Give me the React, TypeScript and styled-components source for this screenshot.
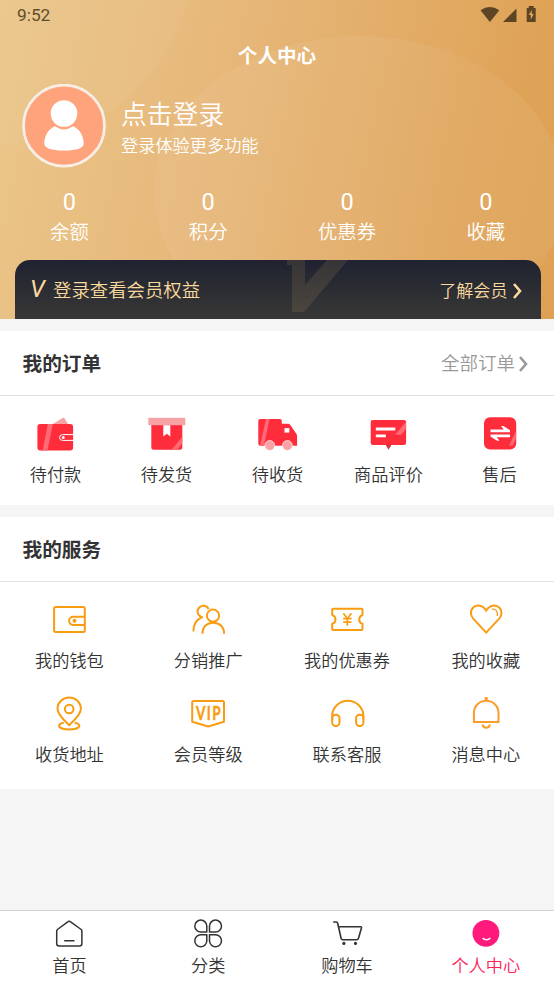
import React from "react";
import styled, { createGlobalStyle } from "styled-components";

const ORANGE = "#f89c12";
const RED = "#ff2c3c";
const INK = "#333333";

const GlobalStyle = createGlobalStyle`
  * { box-sizing: border-box; }
  html, body { margin: 0; padding: 0; background: #f5f5f5; overflow: hidden; }
  body { font-family: Roboto, "Noto Sans CJK SC", sans-serif; font-weight: 350; color: #333; }
  svg { display: block; }
`;

const Page = styled.div`
  width: 554px;
  height: 984px;
  display: flex;
  flex-direction: column;
  overflow: hidden;
  background: #f5f5f5;
`;

const Header = styled.header`
  position: relative;
  flex: none;
  height: 319px;
  display: flex;
  flex-direction: column;
  color: #fff;
  background: linear-gradient(102deg, #ebc68a 0%, #e6b678 42%, #dfa357 88%, #dea055 100%);
`;

const HeaderArt = styled.svg`
  position: absolute;
  inset: 0;
`;

const StatusBar = styled.div`
  position: relative;
  height: 30px;
  padding: 0 17px;
  display: flex;
  justify-content: space-between;
  color: #614d2f;
`;

const Clock = styled.span`
  font-size: 17.3px;
  font-weight: 400;
  line-height: 31px;
`;

const Title = styled.h1`
  position: relative;
  margin: 0;
  height: 51px;
  text-align: center;
  font-size: 19.6px;
  font-weight: 700;
  line-height: 53px;
`;

const Profile = styled.div`
  position: relative;
  height: 105px;
  padding: 2.5px 0 0 22px;
  display: flex;
  gap: 15px;
`;

const ProfileText = styled.div`
  padding-top: 12.5px;
`;

const LoginName = styled.div`
  font-size: 25.8px;
  line-height: 38px;
`;

const LoginHint = styled.div`
  font-size: 17.2px;
  line-height: 24px;
`;

const Stats = styled.div`
  position: relative;
  display: grid;
  grid-template-columns: repeat(4, 138.8px);
  height: 74px;
  text-align: center;
`;

const StatValue = styled.div`
  font-size: 23.5px;
  font-weight: 400;
  line-height: 32px;
`;

const StatLabel = styled.div`
  font-size: 19.4px;
  line-height: 30px;
`;

const MemberCard = styled.div`
  position: relative;
  height: 59px;
  margin: 0 13.5px 0 15px;
  padding: 0 18px 0 15px;
  display: flex;
  align-items: center;
  border-radius: 15px 15px 0 0;
  overflow: hidden;
  color: #fbdb9d;
  background: linear-gradient(#1f2230, #363636 90%);
`;

const Watermark = styled.svg`
  position: absolute;
  left: 271px;
  top: 0;
`;

const VMark = styled.span`
  width: 23px;
  font-size: 24px;
  font-weight: 400;
  font-style: italic;
  line-height: 59px;
`;

const MemberText = styled.span`
  flex: 1;
  padding-top: 2px;
  font-size: 18.4px;
  line-height: 30px;
`;

const MemberLink = styled.span`
  display: flex;
  align-items: center;
  gap: 4px;
  padding-top: 2px;
  font-size: 17.1px;
  line-height: 30px;
`;

const Section = styled.section<{ $height: number }>`
  flex: none;
  height: ${(p) => p.$height}px;
  margin-top: 12px;
  background: #fff;
`;

const SectionHead = styled.div`
  height: 65px;
  padding: 0 25px 0 22.5px;
  display: flex;
  justify-content: space-between;
  align-items: center;
  border-bottom: 1px solid #e0e0e0;
`;

const Heading = styled.h2`
  margin: 0;
  padding-top: 3px;
  font-size: 19.7px;
  font-weight: 700;
  line-height: 30px;
`;

const MoreLink = styled.span`
  display: flex;
  align-items: center;
  gap: 3px;
  padding-top: 2px;
  font-size: 18.5px;
  line-height: 30px;
  color: #999;
`;

const Grid = styled.div<{ $cols: number; $size: number; $top: number; $row: number; $nudge: string }>`
  display: grid;
  grid-template-columns: repeat(${(p) => p.$cols}, ${(p) => p.$size}px);
  grid-auto-rows: ${(p) => p.$row}px;
  padding-top: ${(p) => p.$top}px;

  svg {
    transform: translate(${(p) => p.$nudge});
  }
`;

const Cell = styled.div<{ $active?: boolean; $label: number }>`
  display: flex;
  flex-direction: column;
  align-items: center;
  font-size: 17.2px;
  line-height: ${(p) => p.$label}px;
  white-space: nowrap;
  color: ${(p) => (p.$active ? "#fc2259" : INK)};
`;

const TabBar = styled.nav`
  flex: none;
  height: 74px;
  margin-top: auto;
  border-top: 1px solid #cfcfcf;
  background: #fff;
`;

const Icon = ({ children }: { children: React.ReactNode }) => (
  <svg width="44" height="44" viewBox="0 0 44 44" fill="none">
    {children}
  </svg>
);

const Line = ({ children, color = ORANGE, w = 2 }: { children: React.ReactNode; color?: string; w?: number }) => (
  <Icon>
    <g stroke={color} strokeWidth={w} strokeLinejoin="round">
      {children}
    </g>
  </Icon>
);

const Chevron = ({ color }: { color: string }) => (
  <svg width="11" height="18" viewBox="0 0 11 18" fill="none">
    <path d="M2 2l6 7-6 7" stroke={color} strokeWidth="2.600" />
  </svg>
);

const orders = [
  {
    label: "待付款",
    icon: (
      <Icon>
        <path d="M18.500 12.600L29 6.200q1.300-.6 2.200.5l3.500 5.900z" fill="#f7a3a6" />
        <rect x="3.900" y="12.300" width="35.700" height="26.400" rx="3" fill={RED} />
        <path d="M14.300 12.300h5l-5.300 26.400H9.100z" fill="#ff6a76" />
        <path d="M39.600 22.800H29a2.900 2.900 0 000 5.800h10.600" stroke="#fff" />
        <circle cx="29.700" cy="25.700" r="1.500" fill="#fff" />
      </Icon>
    ),
  },
  {
    label: "待发货",
    icon: (
      <Icon>
        <path d="M6.800 13h31v22.500q0 2.500-2.500 2.500h-26q-2.500 0-2.500-2.500z" fill={RED} />
        <rect x="3.800" y="6" width="37" height="7.400" fill="#f7a3a6" />
        <path d="M18.800 13.400h7v11.400l-3.500-2.800-3.500 2.800z" fill="#fff" />
        <path d="M37.800 25v6L33 38h-6z" fill="#ff6a76" />
      </Icon>
    ),
  },
  {
    label: "待收货",
    icon: (
      <Icon>
        <path d="M4.800 7.300h19.500q2 0 2 2V12h6.500q1.200 0 1.800 1l6.500 9.500q.5.700.5 1.500v10H5.300q-2.500 0-2.500-2.500V9.300q0-2 2-2z" fill={RED} />
        <path d="M10.500 7.300H14L8.500 34h-4z" fill="#ff6a76" />
        <rect x="29" y="16.300" width="4.800" height="4.500" fill="#fff" />
        <circle cx="14.300" cy="33.700" r="5" fill="#f7a3a6" stroke="#fff" strokeWidth=".6" />
        <circle cx="31.900" cy="33.700" r="5" fill="#f7a3a6" stroke="#fff" strokeWidth=".6" />
      </Icon>
    ),
  },
  {
    label: "商品评价",
    icon: (
      <Icon>
        <rect x="4.200" y="8.300" width="35.400" height="25" rx="2" fill={RED} />
        <path d="M19.300 33.300h5.600L22 37.900z" fill="#d8323e" />
        <path d="M9.300 17.200h19.500M9.300 24h10" stroke="#fff" strokeWidth="2.800" />
        <path d="M39.600 10v7l-5 6h-6z" fill="#ff6a76" />
      </Icon>
    ),
  },
  {
    label: "售后",
    icon: (
      <Icon>
        <rect x="6.500" y="5.400" width="32.200" height="32.300" rx="6" fill={RED} />
        <path d="M38.700 19v7l-3.400 7.800h-3.700z" fill="#ff6a76" />
        <path d="M13 17.600h13.300l-2.800-3.500h2.400l6.600 4.300v2.100H13zM32.500 25.400H19.200l2.800 3.500h-2.400L13 24.600v-1.900h19.500z" fill="#fff" />
      </Icon>
    ),
  },
];

const services = [
  {
    label: "我的钱包",
    icon: (
      <Line>
        <rect x="6.900" y="9.500" width="30.700" height="25" rx="1.500" />
        <path d="M37.600 19.200H26a4 4 0 000 8.200h11.600" />
        <circle cx="27.300" cy="23.300" r="2" fill={ORANGE} stroke="none" />
      </Line>
    ),
  },
  {
    label: "分销推广",
    icon: (
      <Line>
        <path d="M22.500 11.700a5.800 5.800 0 10-6.500 8C10.500 22 7 26.500 7.200 34" />
        <circle cx="26.800" cy="18.200" r="6.100" />
        <path d="M16.300 36.200C16.300 29 21 25.200 27 25.200S37.900 29 37.900 36.200" />
      </Line>
    ),
  },
  {
    label: "我的优惠券",
    icon: (
      <Line>
        <path d="M8 11.200h28.300q1 0 1 1v5.300a4.600 4.600 0 000 8.800v5.200q0 1-1 1H8q-1 0-1-1v-5.200a4.600 4.600 0 000-8.800v-5.300q0-1 1-1z" />
        <path d="M18.200 15.800l4 5.400 4-5.400M22.200 21.200v7M18 21.200h8.400M18 24.700h8.400" strokeWidth="1.700" />
      </Line>
    ),
  },
  {
    label: "我的收藏",
    icon: (
      <Line>
        <path strokeLinejoin="miter" d="M22 35.100L9 21.200C6.200 18 5.900 13.500 8.500 10.500 12 6.800 18.500 7.200 22 13c3.500-5.800 10-6.200 13.500-2.500C38.100 13.500 37.800 18 35 21.200z" />
        <path d="M27.500 11.700c3.600-.7 6.500 2.200 5.600 6.800" strokeWidth="1.300" />
      </Line>
    ),
  },
  {
    label: "收货地址",
    icon: (
      <Line>
        <path d="M22 33.800C18 29.500 10.300 23.500 10.300 17.200a11.700 11.200 0 0123.400 0C33.700 23.500 26 29.500 22 33.800z" />
        <circle cx="22" cy="17.500" r="4.300" />
        <path d="M16.500 31.300c-8 1.400-5.500 6.700 5.500 6.700s13.500-5.300 5.500-6.700" />
      </Line>
    ),
  },
  {
    label: "会员等级",
    icon: (
      <Line>
        <path d="M7.500 9.500h28.800q1.500 0 1.500 1.500v19.200L22 35 6 30.200V11q0-1.500 1.500-1.500z" />
        <text x="9.800" y="28.200" textLength="26" letterSpacing="1.8" lengthAdjust="spacingAndGlyphs" fontFamily="Lato" fontWeight="700" fontSize="18" fill={ORANGE} strokeWidth=".4">
          VIP
        </text>
      </Line>
    ),
  },
  {
    label: "联系客服",
    icon: (
      <Line>
        <path d="M7 28V24.500a15.600 15.300 0 0131.200 0V28" />
        <rect x="7" y="23.200" width="7.300" height="11.400" rx="3.500" />
        <rect x="30.900" y="23.200" width="7.300" height="11.400" rx="3.500" />
      </Line>
    ),
  },
  {
    label: "消息中心",
    icon: (
      <Line color="#fb9d2d">
        <path strokeLinejoin="miter" d="M9.700 30.500V21.500a12.300 12.300 0 0124.600 0v9z" />
        <path d="M22 5.500V9.200" strokeWidth="3" />
        <path d="M18.300 33c.8 4.300 6.600 4.300 7.400 0" />
      </Line>
    ),
  },
];

const tabs = [
  {
    label: "首页",
    icon: (
      <Line color={INK} w={1.5}>
        <path d="M21.300 9.900q.7-.5 1.400 0L34 18q.7.600.7 1.500v12.600q0 2.500-2.500 2.500H12q-2.500 0-2.500-2.500V19.500q0-.9.700-1.500z" />
        <path d="M17 29.200h10.300" />
      </Line>
    ),
  },
  {
    label: "分类",
    icon: (
      <Line color={INK} w={1.5}>
        <path d="M20.600 20.600h-6a6 6 0 116-6zM23.300 20.600h6a6 6 0 10-6-6zM20.600 23.300h-6a6 6 0 106 6zM23.300 23.300h6a6 6 0 11-6 6z" />
      </Line>
    ),
  },
  {
    label: "购物车",
    icon: (
      <Line color={INK} w={1.6}>
        <path d="M8 10.500h3.200q.9 0 1.200 1l3.500 15.200q.4 1.500 1.600 1.500h14q1.400 0 1.800-1.500l3-10.500q.2-1-.8-1H13.300" />
        <circle cx="18.700" cy="31.900" r="1.600" fill={INK} stroke="none" />
        <circle cx="30.300" cy="31.900" r="1.600" fill={INK} stroke="none" />
      </Line>
    ),
  },
  {
    label: "个人中心",
    active: true,
    icon: (
      <Icon>
        <circle cx="21.700" cy="21.800" r="13.400" fill="#ff1a7c" />
        <path d="M18.600 26.300c1.700 2.700 5.700 2.700 7.400 0" stroke="#fff" strokeWidth="1.500" />
      </Icon>
    ),
  },
];

const stats = ["余额", "积分", "优惠券", "收藏"];

export default function App() {
  return (
    <Page>
      <GlobalStyle />
      <Header>
        <HeaderArt width="554" height="319" viewBox="0 0 554 319">
          <circle cx="0" cy="-50" r="195" fill="#fff" fillOpacity=".045" />
          <ellipse cx="359" cy="193" rx="205" ry="157" fill="#fff" fillOpacity=".055" />
        </HeaderArt>
        <StatusBar>
          <Clock>9:52</Clock>
          <svg width="57" height="30" viewBox="0 0 57 30" fill="#5c4424">
            <path d="M.5 10.200q9.300-6.400 18.800 0L9.900 22z" />
            <path d="M36.500 8.500V22H23z" />
            <path d="M46.700 8h2V6h5v2h2v14h-9z" />
            <path d="M51.800 10l-3 5h2v4.500l3-5.500h-2z" fill="#e0a65c" />
          </svg>
        </StatusBar>
        <Title>个人中心</Title>
        <Profile>
          <svg width="84" height="84" viewBox="0 0 84 84">
            <circle cx="42" cy="41.700" r="40.500" fill="#ffa37d" stroke="#f7eee5" strokeWidth="2.800" />
            <path d="M33 42.300Q42 48.500 51 42.300c6.500 2.500 10.700 9.700 10.700 17.200Q61.700 66.500 42 66.500T22.300 59.500C22.300 52 26.500 44.800 33 42.300z" fill="#fff" />
            <circle cx="42" cy="29.500" r="13.300" fill="#fff" />
          </svg>
          <ProfileText>
            <LoginName>点击登录</LoginName>
            <LoginHint>登录体验更多功能</LoginHint>
          </ProfileText>
        </Profile>
        <Stats>
          {stats.map((label) => (
            <div key={label}>
              <StatValue>0</StatValue>
              <StatLabel>{label}</StatLabel>
            </div>
          ))}
        </Stats>
        <MemberCard>
          <Watermark width="64" height="59" viewBox="0 0 64 59">
            <path d="M1 0h18v25L41 0h21L18 52H6V5H1z" fill="#dcb06a" fillOpacity=".13" />
          </Watermark>
          <VMark>V</VMark>
          <MemberText>登录查看会员权益</MemberText>
          <MemberLink>
            了解会员
            <Chevron color="#fbdb9d" />
          </MemberLink>
        </MemberCard>
      </Header>

      <Section $height={174}>
        <SectionHead>
          <Heading>我的订单</Heading>
          <MoreLink>
            全部订单
            <Chevron color="#999" />
          </MoreLink>
        </SectionHead>
        <Grid $cols={5} $size={111} $top={16} $row={90} $nudge="-0.5px, -0.2px">
          {orders.map((o) => (
            <Cell key={o.label} $label={39}>
              {o.icon}
              {o.label}
            </Cell>
          ))}
        </Grid>
      </Section>

      <Section $height={271.5}>
        <SectionHead>
          <Heading>我的服务</Heading>
        </SectionHead>
        <Grid $cols={4} $size={138.8} $top={15.5} $row={94} $nudge="0.2px, -0.5px">
          {services.map((s) => (
            <Cell key={s.label} $label={39}>
              {s.icon}
              {s.label}
            </Cell>
          ))}
        </Grid>
      </Section>

      <TabBar>
        <Grid $cols={4} $size={138.8} $top={0.5} $row={73} $nudge="0.2px, -0.5px">
          {tabs.map((t) => (
            <Cell key={t.label} $active={t.active} $label={20}>
              {t.icon}
              {t.label}
            </Cell>
          ))}
        </Grid>
      </TabBar>
    </Page>
  );
}
